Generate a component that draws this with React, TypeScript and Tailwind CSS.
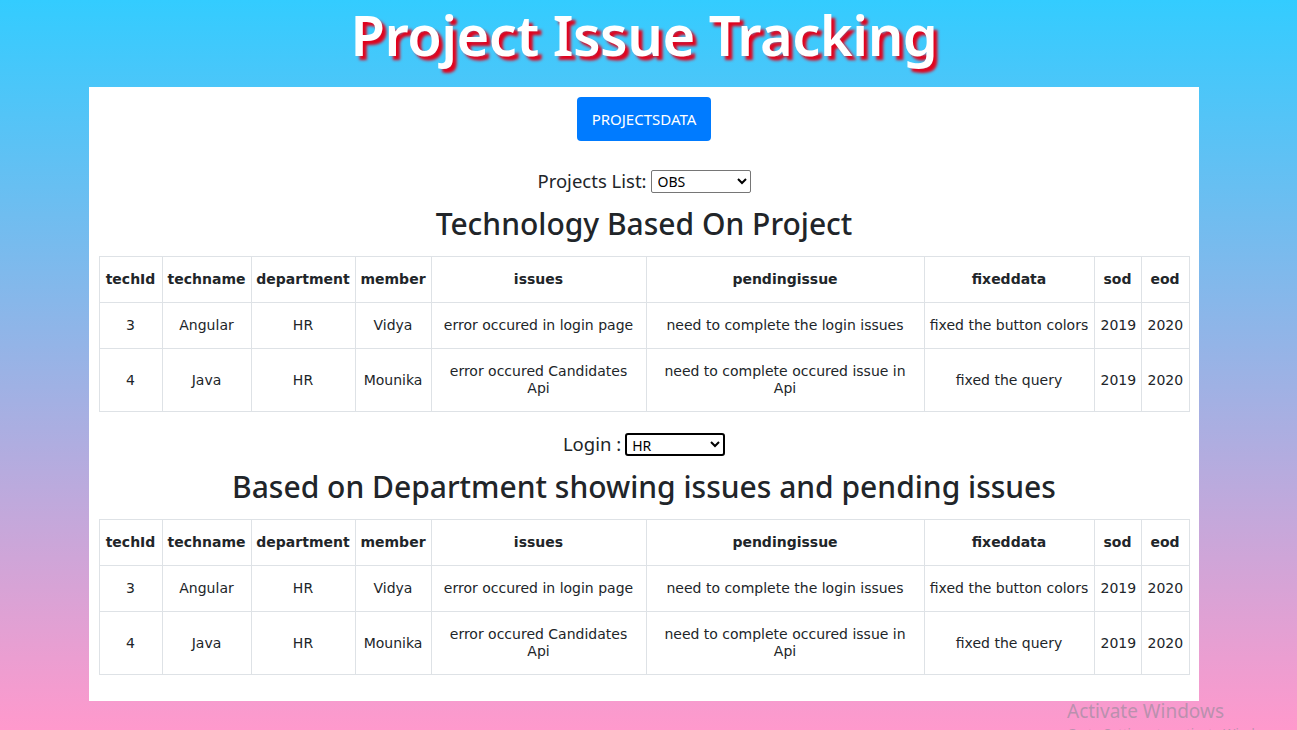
import React from 'react';

type Row = {
  techId: number;
  techname: string;
  department: string;
  member: string;
  issues: string;
  pendingissue: string;
  fixeddata: string;
  sod: number;
  eod: number;
};

const rows: Row[] = [
  {
    techId: 3,
    techname: 'Angular',
    department: 'HR',
    member: 'Vidya',
    issues: 'error occured in login page',
    pendingissue: 'need to complete the login issues',
    fixeddata: 'fixed the button colors',
    sod: 2019,
    eod: 2020,
  },
  {
    techId: 4,
    techname: 'Java',
    department: 'HR',
    member: 'Mounika',
    issues: 'error occured Candidates Api',
    pendingissue: 'need to complete occured issue in Api',
    fixeddata: 'fixed the query',
    sod: 2019,
    eod: 2020,
  },
];

const cols = [
  { key: 'techId', w: 'w-[63px]' },
  { key: 'techname', w: 'w-[89px]' },
  { key: 'department', w: 'w-[104px]' },
  { key: 'member', w: 'w-[76px]' },
  { key: 'issues', w: 'w-[215px]' },
  { key: 'pendingissue', w: 'w-[278px]' },
  { key: 'fixeddata', w: 'w-[170px]' },
  { key: 'sod', w: 'w-[47px]' },
  { key: 'eod', w: 'w-[48px]' },
] as const;

function IssueTable() {
  return (
    <table className="w-[1090px] mx-auto table-fixed border-collapse font-['DejaVu_Sans',Verdana,sans-serif] text-[14px] leading-[17px] text-[#212529]">
      <colgroup>
        {cols.map((c) => <col key={c.key} className={c.w} />)}
      </colgroup>
      <thead>
        <tr>
          {cols.map((c) => (
            <th key={c.key} className="border border-[#dee2e6] px-[4px] py-[14px] font-bold text-center">{c.key}</th>
          ))}
        </tr>
      </thead>
      <tbody>
        {rows.map((r) => (
          <tr key={r.techId}>
            {cols.map((c) => (
              <td
                key={c.key}
                className={c.key === 'fixeddata'
                  ? 'border border-[#dee2e6] px-[4px] py-[14px] text-center whitespace-nowrap'
                  : 'border border-[#dee2e6] px-[6px] py-[14px] text-center'}
              >
                {r[c.key]}
              </td>
            ))}
          </tr>
        ))}
      </tbody>
    </table>
  );
}

export default function App() {
  return (
    <div className="relative min-h-[730px] bg-[linear-gradient(to_bottom,#33ccff,#ff99cc)] font-['Noto_Sans','Open_Sans',sans-serif] text-[#212529] overflow-hidden">
      <div className="h-[87px] pt-[2px] pr-[9px] text-center">
        <h1 className="text-[56px] font-semibold text-white leading-[64px] tracking-[-0.5px] [text-shadow:4px_4px_3px_#e3001b]">
          Project Issue Tracking
        </h1>
      </div>
      <div className="w-[1110px] ml-[89px] bg-white pt-[10px] pb-[26px]">
        <div className="flex justify-center">
          <button type="button" className="h-[44px] w-[134px] rounded-[4px] bg-[#007bff] text-white text-[15px]">
            PROJECTSDATA
          </button>
        </div>
        <div className="mt-[25px] h-[30px] flex items-center justify-center gap-[4px] text-[18.5px]">
          <span>Projects List:</span>
          <select className="w-[100px] h-[23px] border border-[#767676] rounded-[2px] text-[14px] px-[2px] bg-white text-black">
            <option>OBS</option>
          </select>
        </div>
        <h2 className="mt-[9px] mb-[13px] text-center text-[30px] font-medium leading-[38px]">Technology Based On Project</h2>
        <IssueTable />
        <div className="mt-[17px] h-[30px] flex items-center justify-center gap-[4px] text-[18.5px]">
          <span>Login :</span>
          <select className="w-[100px] h-[23px] border-2 border-black rounded-[3px] text-[14px] px-[1px] bg-white text-black">
            <option>HR</option>
          </select>
        </div>
        <h2 className="mt-[9px] mb-[13px] text-center text-[30px] font-medium leading-[38px]">Based on Department showing issues and pending issues</h2>
        <IssueTable />
      </div>
      <div className="absolute left-[1067px] top-[698px] text-[#a98ea6]/80 font-['Noto_Sans',sans-serif] pointer-events-none">
        <div className="text-[19px] leading-[26px]">Activate Windows</div>
        <div className="text-[13px] leading-[18px]">Go to Settings to activate Windows.</div>
      </div>
    </div>
  );
}
